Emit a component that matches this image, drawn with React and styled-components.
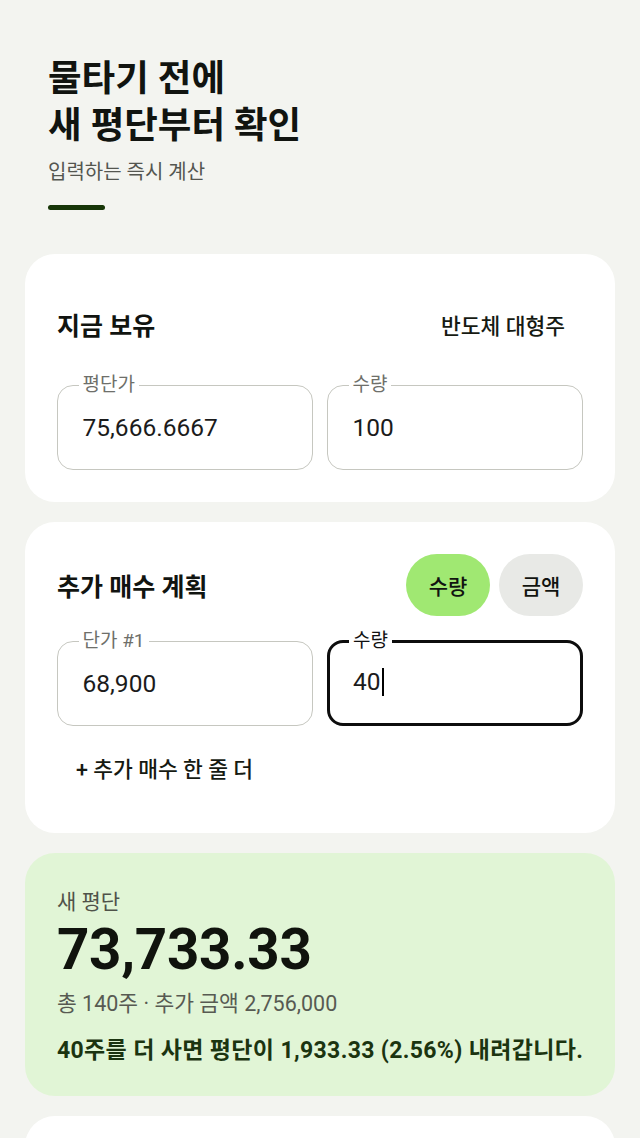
import React from "react";
import styled, { createGlobalStyle } from "styled-components";

const Global = createGlobalStyle`
  html, body { margin: 0; padding: 0; background: #f3f4f0; }
  body { font-family: Roboto, "Noto Sans CJK KR", sans-serif; color: #161a12; }
  * { box-sizing: border-box; }
`;

const Page = styled.div`
  padding: 55px 25px 0;
  display: flex;
  flex-direction: column;
  height: 1138px;
  overflow: hidden;
`;

const Hero = styled.header`
  padding: 0 23px;
  display: flex;
  flex-direction: column;
  margin-bottom: 44px;
`;

const Title = styled.h1`
  margin: 0;
  font-size: 36.5px;
  line-height: 47px;
  font-weight: 700;
  color: #111410;
`;

const Subtitle = styled.p`
  margin: 10px 0 0;
  font-size: 20px;
  line-height: 26px;
  color: #545650;
`;

const Accent = styled.div`
  margin-top: 20px;
  width: 57px;
  height: 5px;
  border-radius: 3px;
  background: #173608;
`;

const Stack = styled.div`
  display: flex;
  flex-direction: column;
  gap: 20px;
`;

const Card = styled.section`
  flex-shrink: 0;
  background: ${(p) => p.$bg || "#ffffff"};
  border-radius: 30px;
  padding: ${(p) => p.$pt ?? 32}px 32px ${(p) => p.$pb ?? 32}px;
  display: flex;
  flex-direction: column;
`;

const CardHead = styled.div`
  height: 62px;
  display: flex;
  align-items: center;
  justify-content: space-between;
`;

const CardTitle = styled.h2`
  margin: 0;
  font-size: 25px;
  font-weight: 700;
  color: #111410;
`;

const Tag = styled.span`
  font-size: 21.5px;
  font-weight: 500;
  color: #161a12;
  margin-right: 18px;
`;

const Toggle = styled.div`
  display: flex;
  gap: 9px;
`;

const Pill = styled.button`
  width: 84px;
  height: 62px;
  border: none;
  border-radius: 31px;
  background: ${(p) => (p.$active ? "#a0e872" : "#e8e9e6")};
  font-family: inherit;
  font-size: 21px;
  font-weight: 500;
  color: #111410;
  padding: 0;
`;

const FieldRow = styled.div`
  display: grid;
  grid-template-columns: 1fr 1fr;
  gap: 14px;
  margin-top: ${(p) => p.$mt}px;
`;

const Field = styled.fieldset`
  margin: 0;
  padding: 0 ${(p) => (p.$focus ? 19 : 20.5)}px;
  border: ${(p) => (p.$focus ? "3px solid #0d0d0d" : "1.5px solid #c6c7c0")};
  border-radius: 16px;
  min-width: 0;
`;

const Legend = styled.legend`
  padding: 0 4px;
  font-size: 19px;
  line-height: 20px;
  color: ${(p) => (p.$focus ? "#111" : "#6e6f6a")};
`;

const Value = styled.div`
  height: ${(p) => (p.$focus ? 72 : 74)}px;
  padding: ${(p) => (p.$focus ? 18 : 20)}px 4px 0;
  font-size: 24.5px;
  line-height: 26px;
  color: #1b1b1b;
  display: flex;
  align-items: flex-start;
`;

const Caret = styled.span`
  display: inline-block;
  width: 2.5px;
  height: 28px;
  background: #000;
  margin-left: 1px;
  margin-top: -1px;
`;

const AddRow = styled.button`
  align-self: flex-start;
  margin: 17px 0 0 10px;
  padding: 0 9px;
  height: 48px;
  border: none;
  background: transparent;
  font-family: inherit;
  font-size: 21.5px;
  font-weight: 500;
  color: #161a12;
`;

const ResultLabel = styled.div`
  font-size: 21px;
  line-height: 26px;
  color: #4f5249;
`;

const BigNumber = styled.div`
  margin-top: 2px;
  font-size: 56.5px;
  line-height: 66px;
  font-weight: 700;
  color: #10130d;
  letter-spacing: -0.3px;
`;

const Meta = styled.div`
  margin-top: 8px;
  font-size: 21.5px;
  line-height: 26px;
  color: #575a52;
`;

const Note = styled.div`
  margin-top: 20px;
  font-size: 23px;
  line-height: 28px;
  font-weight: 700;
  color: #1b3410;
  letter-spacing: 0.35px;
  white-space: nowrap;
`;

const Spacer = styled.div`
  height: 120px;
`;

function OutlinedField({ label, value, focus }) {
  return (
    <Field $focus={focus}>
      <Legend $focus={focus}>{label}</Legend>
      <Value $focus={focus}>
        {value}
        {focus && <Caret />}
      </Value>
    </Field>
  );
}

export default function App() {
  return (
    <>
      <Global />
      <Page>
        <Hero>
          <Title>
            물타기 전에
            <br />새 평단부터 확인
          </Title>
          <Subtitle>입력하는 즉시 계산</Subtitle>
          <Accent />
        </Hero>
        <Stack>
          <Card $pt={39}>
            <CardHead>
              <CardTitle>지금 보유</CardTitle>
              <Tag>반도체 대형주</Tag>
            </CardHead>
            <FieldRow $mt={20}>
              <OutlinedField label="평단가" value="75,666.6667" />
              <OutlinedField label="수량" value="100" />
            </FieldRow>
          </Card>
          <Card $pb={42}>
            <CardHead>
              <CardTitle>추가 매수 계획</CardTitle>
              <Toggle>
                <Pill $active>수량</Pill>
                <Pill>금액</Pill>
              </Toggle>
            </CardHead>
            <FieldRow $mt={15}>
              <OutlinedField label="단가 #1" value="68,900" />
              <OutlinedField label="수량" value="40" focus />
            </FieldRow>
            <AddRow>+ 추가 매수 한 줄 더</AddRow>
          </Card>
          <Card $bg="#e1f5d6" $pt={36} $pb={31}>
            <ResultLabel>새 평단</ResultLabel>
            <BigNumber>73,733.33</BigNumber>
            <Meta>총 140주 · 추가 금액 2,756,000</Meta>
            <Note>40주를 더 사면 평단이 1,933.33 (2.56%) 내려갑니다.</Note>
          </Card>
          <Card>
            <Spacer />
          </Card>
        </Stack>
      </Page>
    </>
  );
}
